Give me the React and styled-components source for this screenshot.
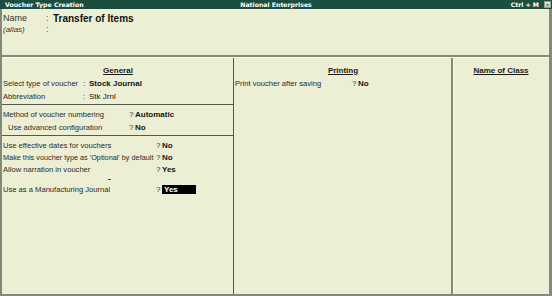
import React from 'react';
import styled, {createGlobalStyle} from "styled-components";

const lineGray = "#85887a";
const cream = "#ecefd4";
const ink = "#262626";

const GlobalStyle = createGlobalStyle`
  html, body {
    margin: 0;
    padding: 0;
    background: ${cream};
  }
  * {
    box-sizing: border-box;
  }
`;

const general = [
  {label: "Select type of voucher", sep: ":", value: "Stock Journal", bold: true},
  {label: "Abbreviation", sep: ":", value: "Stk Jrnl"},
];

const numbering = [
  {label: "Method of voucher numbering", value: "Automatic"},
  {label: "Use advanced configuration", value: "No", indent: true},
];

const App = () => {
  return (
    <Window>
      <GlobalStyle/>
      <TitleBar>
        <TitleLeft>Voucher Type Creation</TitleLeft>
        <TitleCenter>National Enterprises</TitleCenter>
        <TitleRight>
          Ctrl + M
          <CloseBox>×</CloseBox>
        </TitleRight>
      </TitleBar>
      <Body>
        <Header>
          <NameRow>
            <NameLabel>Name</NameLabel>
            <NameColon>:</NameColon>
            <NameValue>Transfer of Items</NameValue>
          </NameRow>
          <AliasRow>
            <AliasLabel>(alias)</AliasLabel>
            <NameColon>:</NameColon>
          </AliasRow>
        </Header>
        <Columns>
          <LeftColumn>
            <Section>
              <Heading>General</Heading>
              {general.map(r => (
                <Row key={r.label} h={13}>
                  <Label w={80}>{r.label}</Label>
                  <Sep>{r.sep}</Sep>
                  <Value bold={r.bold}>{r.value}</Value>
                </Row>
              ))}
            </Section>
            <Section top={3} bottom={1}>
              {numbering.map(r => (
                <Row key={r.label} h={13}>
                  <Label w={r.indent ? 121 : 126} indent={r.indent}>{r.label}</Label>
                  <Sep>?</Sep>
                  <Value bold>{r.value}</Value>
                </Row>
              ))}
            </Section>
            <Section top={3} last>
              <Row h={12}>
                <Label w={153}>Use effective dates for vouchers</Label>
                <Sep>?</Sep>
                <Value bold>No</Value>
              </Row>
              <Row h={12}>
                <Label w={153} small>Make this voucher type as 'Optional' by default</Label>
                <Sep>?</Sep>
                <Value bold>No</Value>
              </Row>
              <Row h={12}>
                <Label w={153}>Allow narration in voucher</Label>
                <Sep>?</Sep>
                <Value bold>Yes</Value>
              </Row>
              <Spacer>
                <Tick/>
              </Spacer>
              <Row h={12}>
                <Label w={153}>Use as a Manufacturing Journal</Label>
                <Sep>?</Sep>
                <Selected>Yes</Selected>
              </Row>
            </Section>
          </LeftColumn>
          <MiddleColumn>
            <Heading>Printing</Heading>
            <Row h={13}>
              <Label w={117}>Print voucher after saving</Label>
              <Sep>?</Sep>
              <Value bold>No</Value>
            </Row>
          </MiddleColumn>
          <RightColumn>
            <Heading>Name of Class</Heading>
          </RightColumn>
        </Columns>
      </Body>
    </Window>
  );
};

const Window = styled.div`
  width: 552px;
  height: 296px;
  display: flex;
  flex-direction: column;
  background: ${cream};
  font-family: "Liberation Sans", Arial, sans-serif;
  color: ${ink};
  overflow: hidden;
`;

const TitleBar = styled.div`
  height: 9px;
  flex: none;
  display: grid;
  grid-template-columns: 1fr auto 1fr;
  align-items: center;
  background: #1c4e3f;
  color: #ffffff;
  font-family: "DejaVu Sans", Verdana, sans-serif;
  font-weight: bold;
  font-size: 6.2px;
  line-height: 9px;
  white-space: nowrap;
`;

const TitleLeft = styled.div`
  padding-left: 5px;
`;

const TitleCenter = styled.div`
  text-align: center;
`;

const TitleRight = styled.div`
  display: flex;
  justify-content: flex-end;
  align-items: center;
  gap: 5px;
  padding-right: 1px;
`;

const CloseBox = styled.span`
  width: 7px;
  height: 7px;
  display: flex;
  align-items: center;
  justify-content: center;
  background: #e4e6dc;
  border: 1px solid #9a9c92;
  color: #333;
  font-size: 6px;
  line-height: 5px;
  font-weight: normal;
`;

const Body = styled.div`
  flex: 1;
  display: flex;
  flex-direction: column;
  border-left: 2px solid ${lineGray};
  border-right: 3px solid ${lineGray};
  border-bottom: 2px solid ${lineGray};
`;

const Header = styled.div`
  height: 48px;
  flex: none;
  padding-top: 3px;
  padding-left: 1px;
  border-bottom: 2px solid ${lineGray};
`;

const NameRow = styled.div`
  height: 12px;
  display: flex;
  align-items: center;
`;

const AliasRow = styled(NameRow)`
  height: 10px;
`;

const NameLabel = styled.span`
  width: 43px;
  font-size: 9px;
  color: #333;
`;

const AliasLabel = styled.span`
  width: 43px;
  font-size: 8px;
  font-style: italic;
  color: #333;
`;

const NameColon = styled.span`
  width: 7px;
  font-size: 9px;
  color: #555;
`;

const NameValue = styled.span`
  font-size: 10px;
  font-weight: bold;
  color: #111;
`;

const Columns = styled.div`
  flex: 1;
  display: grid;
  grid-template-columns: 232px 219px 95px;
  border-top: 1px solid #fafbeb;
`;

const LeftColumn = styled.div`
  border-right: 1px solid #55584c;
  display: flex;
  flex-direction: column;
`;

const MiddleColumn = styled.div`
  border-right: 2px solid ${lineGray};
  padding-top: 7px;
  padding-left: 1px;
`;

const RightColumn = styled.div`
  border-left: 1px solid #fafbeb;
  padding-top: 7px;
`;

const Section = styled.div`
  padding: ${p => p.top || 7}px 0 ${p => p.bottom ?? 1}px 1px;
  border-bottom: ${p => p.last ? "none" : "1px solid #55584c"};
`;

const Heading = styled.div`
  height: 12px;
  line-height: 12px;
  text-align: center;
  font-size: 8px;
  font-weight: bold;
  text-decoration: underline;
  color: #1a1a1a;
`;

const Row = styled.div`
  height: ${p => p.h}px;
  display: flex;
  align-items: center;
  white-space: nowrap;
`;

const Label = styled.span`
  width: ${p => p.w}px;
  margin-left: ${p => p.indent ? 5 : 0}px;
  font-size: ${p => p.small ? 7.3 : 7.6}px;
  color: #2b2b2b;
  overflow: hidden;
`;

const Sep = styled.span`
  width: 6px;
  font-size: 8px;
  color: #333;
`;

const Value = styled.span`
  font-size: 8px;
  font-weight: ${p => p.bold ? "bold" : "normal"};
  color: #151515;
`;

const Selected = styled.span`
  width: 34px;
  height: 9px;
  line-height: 9px;
  background: #000000;
  color: #ffffff;
  font-size: 8px;
  font-weight: bold;
  padding-left: 2px;
`;

const Spacer = styled.div`
  height: 8px;
  display: flex;
  align-items: center;
`;

const Tick = styled.span`
  width: 3px;
  height: 1px;
  margin-left: 105px;
  background: #444;
`;

export default App;
